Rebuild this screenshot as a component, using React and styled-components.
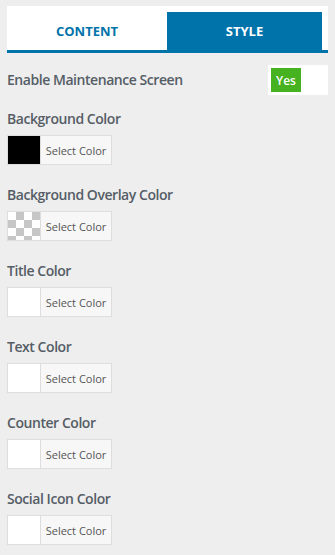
import React from 'react';
import styled, { createGlobalStyle } from 'styled-components';

const GlobalStyle = createGlobalStyle`
  body {
    margin: 0;
    background: #eeeeee;
    font-family: "Open Sans", "Noto Sans", sans-serif;
  }
`;

const fields = [
  { label: 'Background Color', color: '#000000' },
  { label: 'Background Overlay Color', checker: true },
  { label: 'Title Color', color: '#ffffff' },
  { label: 'Text Color', color: '#ffffff' },
  { label: 'Counter Color', color: '#ffffff' },
  { label: 'Social Icon Color', color: '#ffffff' },
];

class App extends React.Component {
  render() {
    return (
      <Panel>
        <GlobalStyle />
        <Tabs>
          <Tab>CONTENT</Tab>
          <Tab active>STYLE</Tab>
        </Tabs>
        <ToggleRow>
          <Label>Enable Maintenance Screen</Label>
          <Toggle>
            <ToggleOn>Yes</ToggleOn>
          </Toggle>
        </ToggleRow>
        {fields.map((f, i) => (
          <Field key={i}>
            <Label>{f.label}</Label>
            <Picker>
              <Swatch color={f.color} checker={f.checker} />
              <PickerText>Select Color</PickerText>
            </Picker>
          </Field>
        ))}
      </Panel>
    );
  }
}

const Panel = styled.div`
  padding: 6px 7px 0;
  width: 321px;
`;

const Tabs = styled.div`
  display: grid;
  grid-template-columns: 160px 155px;
  padding-top: 6px;
  background: #fff;
  border-bottom: 3px solid #0073aa;
`;

const Tab = styled.div`
  height: 38px;
  display: flex;
  align-items: center;
  justify-content: center;
  font-size: 13px;
  font-weight: 700;
  color: ${props => (props.active ? '#fff' : '#0073aa')};
  background: ${props => (props.active ? '#0073aa' : '#fff')};
`;

const ToggleRow = styled.div`
  display: flex;
  align-items: center;
  justify-content: space-between;
  margin-top: 12px;
  margin-bottom: 14px;
`;

const Label = styled.div`
  font-size: 14px;
  line-height: 20px;
  font-weight: 600;
  color: #555d66;
  letter-spacing: -0.45px;
`;

const Toggle = styled.div`
  width: 54px;
  height: 24px;
  padding: 3px;
  background: #fff;
`;

const ToggleOn = styled.div`
  width: 30px;
  height: 24px;
  background: #46b21f;
  color: #fff;
  font-size: 12px;
  font-weight: 600;
  display: flex;
  align-items: center;
  justify-content: center;
`;

const Field = styled.div`
  margin-bottom: 20px;
`;

const Picker = styled.div`
  display: flex;
  width: 103px;
  height: 28px;
  margin-top: 6px;
  border: 1px solid #dddddd;
  background: #f7f7f7;
`;

const Swatch = styled.div`
  width: 32px;
  height: 28px;
  border-right: 1px solid #dddddd;
  background: ${props =>
    props.checker
      ? 'conic-gradient(#c6c6c6 25%, #fff 0 50%, #c6c6c6 0 75%, #fff 0) 0 0 / 16px 16px'
      : props.color};
`;

const PickerText = styled.div`
  flex: 1;
  display: flex;
  align-items: center;
  justify-content: center;
  font-size: 11px;
  color: #555;
`;

export default App;
